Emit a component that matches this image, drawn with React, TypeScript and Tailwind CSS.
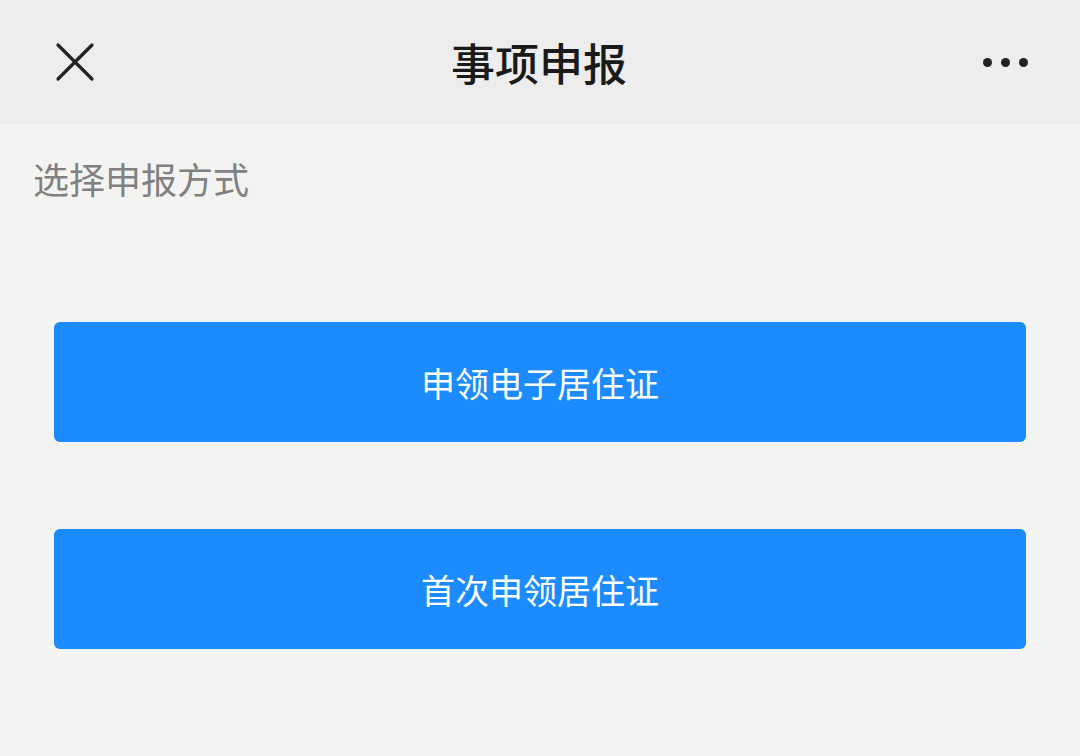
const font = { fontFamily: '"Noto Sans CJK SC", "Noto Sans", sans-serif' };

type ActionButtonProps = { label: string };

function ActionButton({ label }: ActionButtonProps) {
  return (
    <button
      type="button"
      className="flex h-[120px] w-full items-center justify-center rounded-[6px] bg-[#1b8bfd] text-[34px] text-white"
    >
      {label}
    </button>
  );
}

export default function App() {
  return (
    <div className="flex h-[756px] w-[1080px] flex-col bg-[#f3f3f1]" style={font}>
      <header className="flex h-[124px] items-center justify-between bg-[#ededed] pl-[55px] pr-[52px]">
        <svg width="40" height="40" viewBox="0 0 40 40" aria-hidden>
          <path
            d="M3 3 L37 37 M37 3 L3 37"
            stroke="#222"
            strokeWidth="3.2"
            strokeLinecap="round"
            fill="none"
          />
        </svg>
        <h1 className="text-[44px] font-medium text-[#1a1a1a]">事项申报</h1>
        <div className="flex items-center gap-[9px]">
          <span className="h-[9px] w-[9px] rounded-full bg-[#222]" />
          <span className="h-[9px] w-[9px] rounded-full bg-[#222]" />
          <span className="h-[9px] w-[9px] rounded-full bg-[#222]" />
        </div>
      </header>

      <p className="pl-[33px] pt-[30px] text-[36px] leading-[48px] text-[#808080]">选择申报方式</p>

      <div className="flex flex-col gap-[87px] px-[54px] pt-[120px]">
        <ActionButton label="申领电子居住证" />
        <ActionButton label="首次申领居住证" />
      </div>
    </div>
  );
}
